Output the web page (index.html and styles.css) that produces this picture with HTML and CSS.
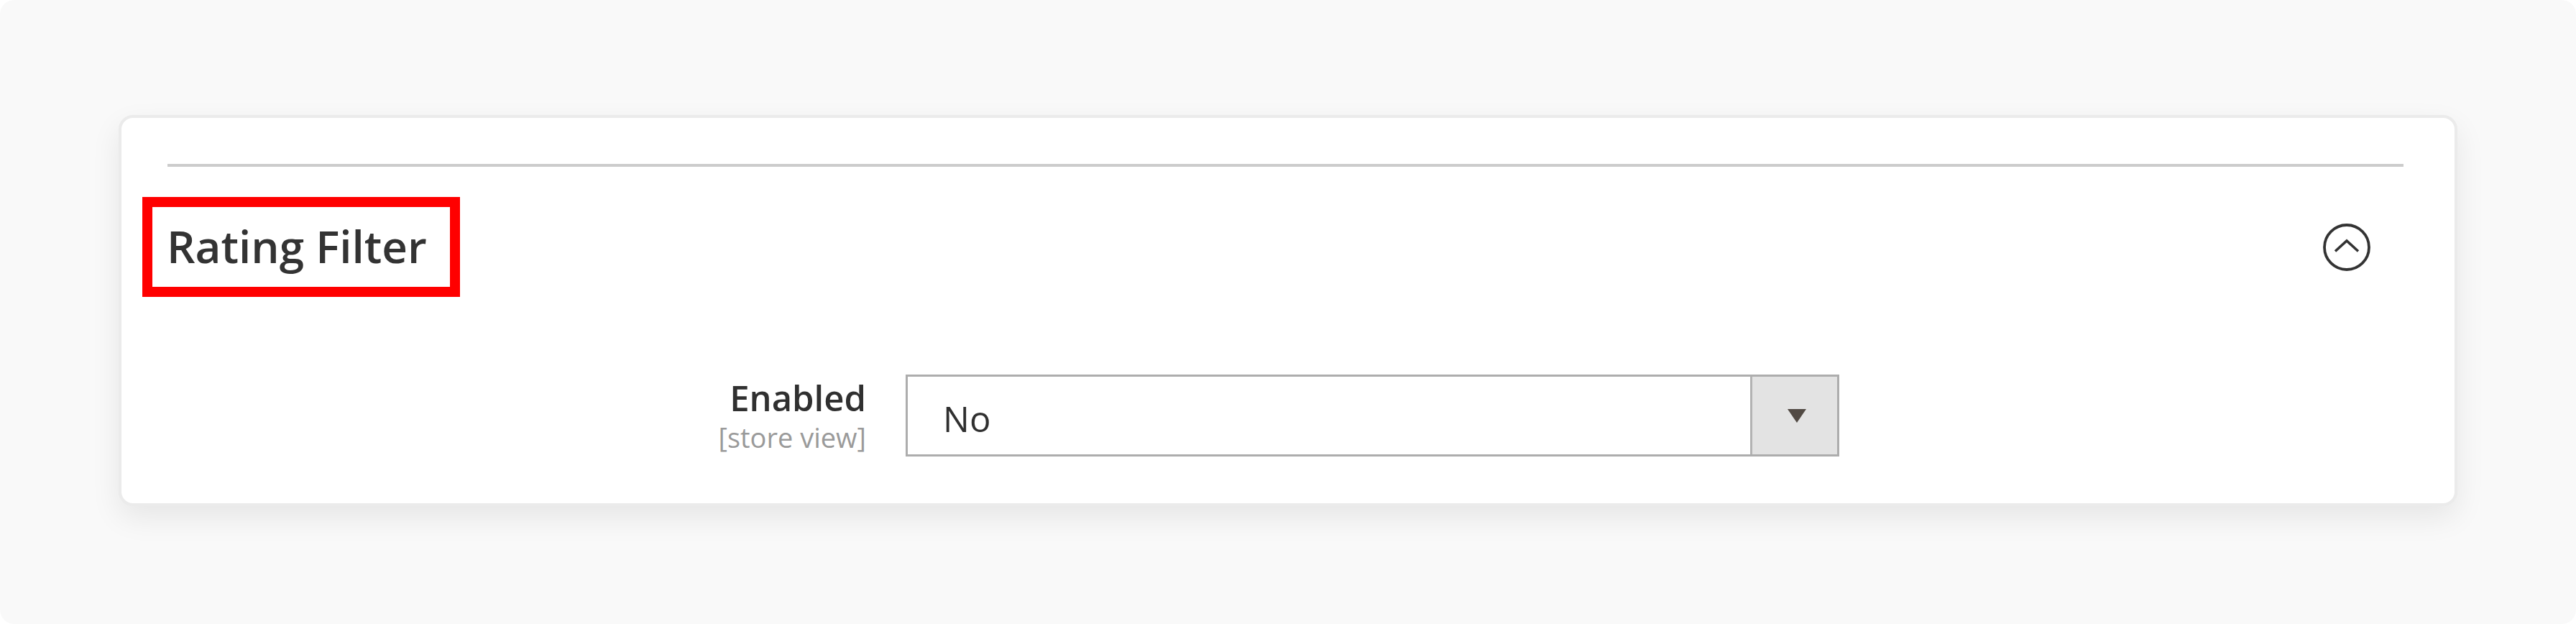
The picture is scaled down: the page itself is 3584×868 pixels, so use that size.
FILE: index.html
```html
<!DOCTYPE html>
<html lang="en">
<head>
<meta charset="utf-8">
<title>Rating Filter</title>
<link rel="stylesheet" href="styles.css">
</head>
<body>
<div class="page">
  <section class="card">
    <div class="divider"></div>
    <div class="section-head">
      <h2 class="title">Rating Filter</h2>
      <svg class="toggle" width="68" height="68" viewBox="0 0 68 68" aria-hidden="true">
        <circle cx="34" cy="34" r="31" fill="none" stroke="#333" stroke-width="3.8"/>
        <polyline points="18,39.5 34,25 50,39.5" fill="none" stroke="#333" stroke-width="3.6"/>
      </svg>
    </div>
    <div class="field">
      <div class="label">
        <div class="label-main">Enabled</div>
        <div class="label-scope">[store view]</div>
      </div>
      <div class="select">
        <div class="select-value">No</div>
        <div class="select-btn"><span class="arrow"></span></div>
      </div>
    </div>
  </section>
</div>
</body>
</html>
```

FILE: styles.css
```css
html, body {
  margin: 0;
  padding: 0;
  background: #ffffff;
}

.page {
  box-sizing: border-box;
  width: 3584px;
  height: 868px;
  padding: 160px 165px 0 165px;
  background: #f9f9f9;
  border-radius: 20px;
  font-family: "Open Sans", "Liberation Sans", sans-serif;
  color: #333333;
}

.card {
  box-sizing: border-box;
  height: 544px;
  border: 4px solid #ebebeb;
  border-radius: 20px;
  background: #ffffff;
  padding: 64px 71px 0 64px;
  box-shadow: 0 16px 40px rgba(0, 0, 0, 0.08);
}

.divider {
  height: 4px;
  background: #cccccc;
}

.section-head {
  display: flex;
  align-items: center;
  justify-content: space-between;
  margin-top: 42px;
}

.title {
  box-sizing: border-box;
  margin: 0 0 0 -35px;
  width: 442px;
  height: 139px;
  border: 14px solid #ff0000;
  padding: 0 0 4px 20px;
  display: flex;
  align-items: center;
  font-size: 62px;
  font-weight: 600;
  color: #333333;
  white-space: nowrap;
}

.toggle {
  display: block;
  margin-right: 45px;
}

.field {
  display: flex;
  align-items: flex-start;
  margin-top: 108px;
}

.label {
  width: 972px;
  margin-right: 55px;
  text-align: right;
  padding-top: 3px;
}

.label-main {
  font-size: 49px;
  font-weight: 600;
  line-height: 1.2;
  color: #303030;
}

.label-scope {
  margin-top: 3px;
  font-size: 38px;
  line-height: 1.2;
  color: #9a9a9a;
}

.select {
  box-sizing: border-box;
  display: flex;
  width: 1299px;
  height: 114px;
  border: 3px solid #adadad;
  background: #ffffff;
}

.select-value {
  flex: 1;
  display: flex;
  align-items: center;
  padding: 8px 0 0 49px;
  font-size: 49px;
  color: #303030;
}

.select-btn {
  box-sizing: border-box;
  width: 121px;
  border-left: 3px solid #b3b3b3;
  background: #e3e3e3;
  display: flex;
  align-items: center;
  justify-content: center;
}

.arrow {
  width: 0;
  height: 0;
  border-left: 13px solid transparent;
  border-right: 13px solid transparent;
  border-top: 19px solid #514943;
  margin-left: 6px;
}
```
